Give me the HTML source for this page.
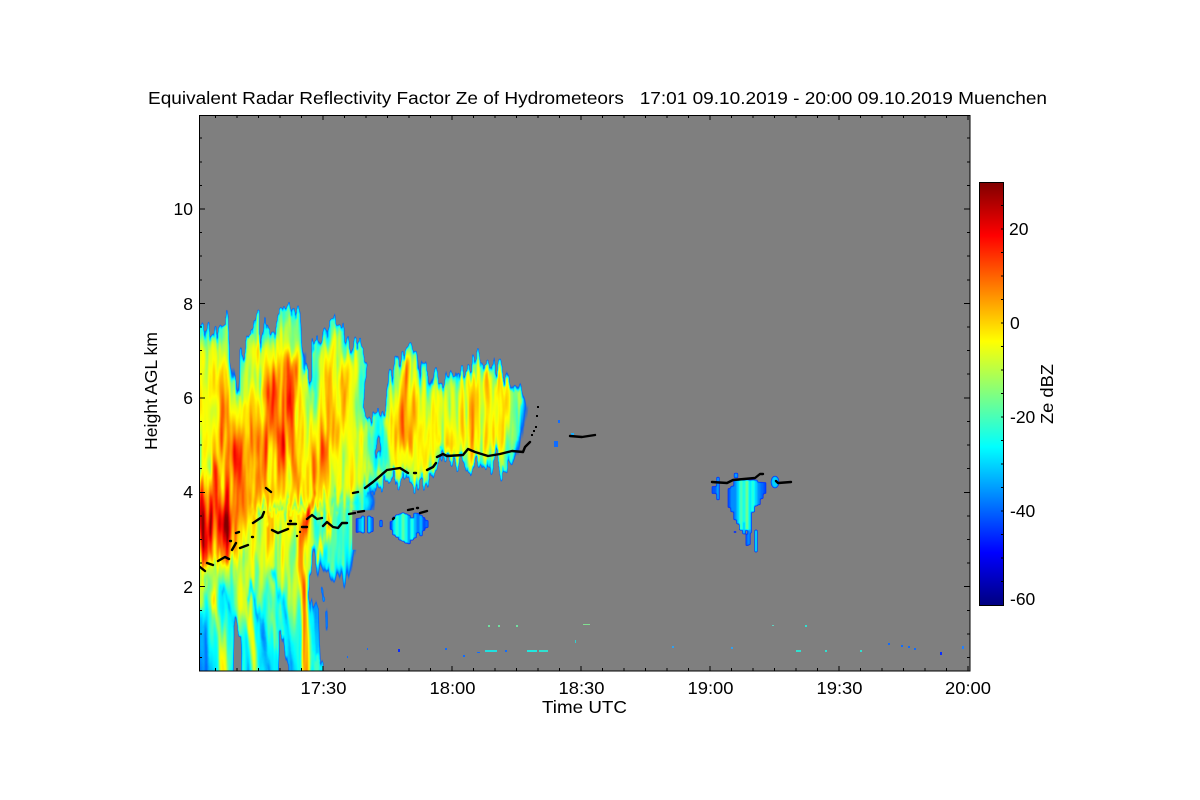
<!DOCTYPE html>
<html><head><meta charset="utf-8"><title>Radar Reflectivity</title>
<style>html,body{margin:0;padding:0;background:#fff}svg{display:block}text{font-family:"Liberation Sans",sans-serif;font-size:17.5px;fill:#000}</style>
</head><body>
<svg xmlns="http://www.w3.org/2000/svg" width="1200" height="800" viewBox="0 0 1200 800">
<defs>
<clipPath id="plot"><rect x="199" y="115" width="771" height="556"/></clipPath>
<linearGradient id="cb" x1="0" y1="0" x2="0" y2="1">
<stop offset="0" stop-color="#800000"/><stop offset=".125" stop-color="#ff0000"/><stop offset=".375" stop-color="#ffff00"/><stop offset=".5" stop-color="#80ff80"/><stop offset=".625" stop-color="#00ffff"/><stop offset=".875" stop-color="#0000ff"/><stop offset="1" stop-color="#00007f"/>
</linearGradient>
<linearGradient id="low" gradientUnits="userSpaceOnUse" x1="0" y1="485" x2="0" y2="680">
<stop offset="0" stop-color="#8c8c8c"/><stop offset=".35" stop-color="#707070"/><stop offset=".55" stop-color="#5a5a5a"/><stop offset=".8" stop-color="#424242"/><stop offset="1" stop-color="#383838"/>
</linearGradient>
<filter id="jet" filterUnits="userSpaceOnUse" x="150" y="80" width="870" height="640" color-interpolation-filters="sRGB">
<feTurbulence type="fractalNoise" baseFrequency=".3 .012" numOctaves="3" seed="4" result="n"/>
<feColorMatrix in="n" type="matrix" values="0 0 0 0 .5  0 1 0 0 0  0 0 0 0 0  0 0 0 0 1" result="d"/>
<feDisplacementMap in="SourceGraphic" in2="d" scale="50" xChannelSelector="R" yChannelSelector="G" result="s"/>
<feTurbulence type="fractalNoise" baseFrequency=".2 .014" numOctaves="2" seed="11" result="n2"/>
<feColorMatrix in="n2" type="matrix" values="1 0 0 0 0  1 0 0 0 0  1 0 0 0 0  0 0 0 0 1" result="g"/>
<feComposite in="s" in2="g" operator="arithmetic" k1="1.1" k2=".45" k3="0" k4="0" result="m"/>
<feGaussianBlur in="m" stdDeviation=".8"/>
<feComponentTransfer>
<feFuncR type="table" tableValues=".5 .5 0 0 0 0 .235 .47 .706 .9 1 1 1 1 1 1 1 1 .94 .78 .5"/>
<feFuncG type="table" tableValues=".5 .5 .39 .67 .9 1 1 1 1 1 1 .88 .745 .627 .51 .373 .235 .098 0 0 0"/>
<feFuncB type="table" tableValues=".5 .5 1 1 1 1 .784 .51 .275 .078 0 0 0 0 0 0 0 0 0 0 0"/>
</feComponentTransfer>
</filter>
<filter id="jet2" filterUnits="userSpaceOnUse" x="352" y="510" width="84" height="40" color-interpolation-filters="sRGB">
<feGaussianBlur in="SourceGraphic" stdDeviation=".7"/>
<feComponentTransfer>
<feFuncR type="table" tableValues=".5 .5 0 0 0 0 .235 .47 .706 .9 1 1 1 1 1 1 1 1 .94 .78 .5"/>
<feFuncG type="table" tableValues=".5 .5 .157 .43 .706 1 1 1 1 1 1 .88 .745 .627 .51 .373 .235 .098 0 0 0"/>
<feFuncB type="table" tableValues=".5 .5 1 1 1 1 .784 .51 .275 .078 0 0 0 0 0 0 0 0 0 0 0"/>
</feComponentTransfer>
</filter>
<filter id="jet3" filterUnits="userSpaceOnUse" x="706" y="470" width="86" height="90" color-interpolation-filters="sRGB">
<feGaussianBlur in="SourceGraphic" stdDeviation=".7"/>
<feComponentTransfer>
<feFuncR type="table" tableValues=".5 .5 0 0 0 0 .235 .47 .706 .9 1 1 1 1 1 1 1 1 .94 .78 .5"/>
<feFuncG type="table" tableValues=".5 .5 .157 .43 .706 1 1 1 1 1 1 .88 .745 .627 .51 .373 .235 .098 0 0 0"/>
<feFuncB type="table" tableValues=".5 .5 1 1 1 1 .784 .51 .275 .078 0 0 0 0 0 0 0 0 0 0 0"/>
</feComponentTransfer>
</filter>
<filter id="inset" filterUnits="userSpaceOnUse" x="150" y="250" width="420" height="300">
<feMorphology operator="erode" radius="6"/><feGaussianBlur stdDeviation="4"/>
</filter>
<filter id="b5" filterUnits="userSpaceOnUse" x="150" y="250" width="420" height="400"><feGaussianBlur stdDeviation="5"/></filter>
<filter id="b2" filterUnits="userSpaceOnUse" x="150" y="400" width="300" height="320"><feGaussianBlur stdDeviation="1.3"/></filter>
<polygon id="m" points="190,480 190,323 200,323 210,337 215,335 220,325 227,322 228,337 232,377 240,395 240,357 248,338 255,330 257,312 259,312 259,340 265,328 273,333 280,318 283,310 287,303 289,303 290,315 300,315 303,377 312,373 312,343 323,337 330,323 345,328 347,350 360,342 367,373 363,407 367,420 373,415 385,413 390,377 402,353 410,345 415,353 420,383 423,363 428,363 430,383 443,380 457,377 470,367 473,358 480,367 493,373 500,367 507,383 513,392 523,397 520,423 513,450 507,470 502,467 497,453 490,465 470,467 462,463 457,457 440,457 443,468 438,467 423,485 417,482 397,483 390,478 380,485 367,490 363,502 300,510 190,510"/>
</defs>

<rect x="199" y="115" width="771" height="556" fill="#808080"/>

<g clip-path="url(#plot)">
<g filter="url(#jet)">
<rect x="150" y="80" width="870" height="640" fill="#000"/>
<polygon fill="url(#low)" points="190,490 370,483 353,503 347,540 342,575 337,557 327,568 322,553 312,560 308,590 311,610 313,650 323,665 323,720 190,720"/>
<use href="#m" fill="#505050"/>
<use href="#m" fill="#787878" filter="url(#inset)"/>
<g filter="url(#b5)">
<polygon fill="#a8a8a8" points="212,385 224,358 236,400 250,450 248,482 228,488 218,440"/>
<polygon fill="#bcbcbc" points="226,435 240,462 234,482 222,472"/>
<polygon fill="#a8a8a8" points="285,345 300,355 298,420 295,470 265,482 250,440 252,400 270,380"/>
<polygon fill="#bcbcbc" points="287,390 297,400 295,450 276,452 268,425"/>
<polygon fill="#a0a0a0" points="330,368 345,378 345,420 325,468 315,480 310,455 325,420"/>
<polygon fill="#949494" points="230,470 335,468 325,495 250,503"/>
<polygon fill="#b0b0b0" points="190,478 240,468 256,500 250,530 235,556 190,566"/>
<polygon fill="#c8c8c8" points="190,497 225,492 238,510 230,532 190,548"/>
<polygon fill="#4c4c4c" points="312,515 375,490 345,580 312,560"/>
<polygon fill="#a8a8a8" points="398,372 410,352 418,400 412,450 397,452 392,420"/>
<polygon fill="#909090" points="424,378 431,378 431,440 424,440"/>
<polygon fill="#949494" points="468,372 480,376 480,430 466,442 460,410"/>
<polygon fill="#949494" points="493,380 504,380 505,430 494,445"/>
<polygon fill="#585858" points="508,395 525,395 518,440 508,462"/>
<ellipse cx="378" cy="447" rx="12" ry="26" fill="#3e3e3e"/>
</g>
<ellipse cx="378" cy="447" rx="3" ry="8" fill="#000"/>
<g filter="url(#b2)" fill="none" stroke-linecap="round">
<path d="M205 690C203 650 201 630 195 612" stroke="#202020" stroke-width="13"/>
<path d="M224 690C224 640 218 610 205 585" stroke="#727272" stroke-width="6"/>
<path d="M256 690C254 640 246 610 236 575" stroke="#6c6c6c" stroke-width="6"/>
<path d="M284 690C280 640 268 600 255 555" stroke="#626262" stroke-width="4"/>
<path d="M242 660C238 630 230 610 222 590" stroke="#303030" stroke-width="4"/>
<path d="M268 680C265 640 258 610 250 590" stroke="#1e1e1e" stroke-width="4"/>
<path d="M294 690C291 640 283 600 272 570" stroke="#242424" stroke-width="3"/>
<path d="M306 690C306 620 304 590 301 570C298 550 305 520 316 498" stroke="#b4b4b4" stroke-width="6"/>
<path d="M316 690C316 650 314 620 310 600" stroke="#484848" stroke-width="5"/>
<path d="M331 505C328 530 322 545 318 555" stroke="#8c8c8c" stroke-width="4"/>
</g>
<polygon fill="#000" points="233,700 242,700 241,632 234,624"/>
<polygon fill="#000" points="278,700 291,700 284,642 279,628"/>
<g fill="none" stroke-linecap="round">
<path d="M316 603L318 657" stroke="#2c2c2c" stroke-width="5"/>
<path d="M326 616L327 645" stroke="#242424" stroke-width="2.5"/>
<path d="M322 590L324 605" stroke="#242424" stroke-width="2.5"/>
</g>
</g>

<g filter="url(#jet2)">
<rect x="352" y="510" width="84" height="40" fill="#000"/>
<g fill="none" stroke-width="3">
<path d="M357 518V533" stroke="#202020"/><path d="M360 518V532" stroke="#343434"/><path d="M363 516V533" stroke="#3c3c3c"/><path d="M369 516V533" stroke="#3c3c3c"/><path d="M372 517V532" stroke="#282828"/><path d="M381 520V527" stroke="#2c2c2c"/>
<path d="M391 521V530" stroke="#202020"/><path d="M394 517V535" stroke="#3c3c3c"/><path d="M397 515V537" stroke="#4c4c4c"/><path d="M400 514V540" stroke="#3c3c3c"/><path d="M403 513V541" stroke="#545454"/><path d="M406 514V543" stroke="#444444"/><path d="M409 515V544" stroke="#303030"/><path d="M412 518V540" stroke="#484848"/><path d="M415 513V538" stroke="#343434"/><path d="M418 513V533" stroke="#282828"/><path d="M421 515V536" stroke="#343434"/><path d="M424 517V531" stroke="#202020"/><path d="M427 520V528" stroke="#262626"/>
</g>
</g>

<g filter="url(#jet3)">
<rect x="706" y="470" width="86" height="90" fill="#000"/>
<g fill="none" stroke-width="3">
<path d="M729 488V508" stroke="#222"/><path d="M732 486V512" stroke="#2c2c2c"/><path d="M735 480V520" stroke="#2c2c2c"/><path d="M738 480V524" stroke="#383838"/><path d="M741 480V530" stroke="#505050"/><path d="M744 480V526" stroke="#444"/><path d="M747 480V530" stroke="#585858"/><path d="M750 480V533" stroke="#3c3c3c"/><path d="M753 480V512" stroke="#484848"/><path d="M756 480V506" stroke="#383838"/><path d="M759 482V505" stroke="#2c2c2c"/><path d="M762 482V499" stroke="#262626"/><path d="M765 482V494" stroke="#202020"/>
<path d="M744 522V534" stroke="#383838"/><path d="M747 534V546" stroke="#242424"/><path d="M749 530V545" stroke="#2c2c2c"/>
</g>
<path d="M756 530V552" stroke="#444" stroke-width="2.5" fill="none"/>
<path d="M718 477V500" stroke="#303030" stroke-width="3" fill="none"/>
<path d="M714 486V494" stroke="#222" stroke-width="5" fill="none"/>
<path d="M735 531V533" stroke="#242424" stroke-width="3" fill="none"/>
<path d="M736 473V478" stroke="#303030" stroke-width="4" fill="none"/>
<ellipse cx="775" cy="482" rx="4" ry="6" fill="#383838"/>
</g>

<g fill="#0f6cff">
<rect x="554" y="441" width="4" height="6"/><rect x="558" y="420" width="2" height="3"/><rect x="571" y="433" width="3" height="3" fill="#18b0ff"/>
<rect x="398" y="649" width="2" height="3" fill="#0a2cff"/><rect x="367" y="648" width="1" height="2"/><rect x="347" y="656" width="1" height="2"/><rect x="445" y="648" width="2" height="2"/><rect x="463" y="655" width="2" height="2"/>
<rect x="485" y="650" width="12" height="2" fill="#20e0e0"/><rect x="477" y="652" width="3" height="1"/><rect x="527" y="650" width="10" height="2" fill="#20e8e0"/><rect x="539" y="650" width="9" height="2" fill="#30e0d0"/><rect x="505" y="650" width="2" height="2"/><rect x="488" y="625" width="2" height="2" fill="#70e0a0"/><rect x="498" y="625" width="2" height="2" fill="#70e0a0"/><rect x="516" y="625" width="2" height="2" fill="#70e0a0"/>
<rect x="583" y="624" width="7" height="1" fill="#80e090"/><rect x="575" y="640" width="1" height="3" fill="#30d0d0"/><rect x="672" y="646" width="2" height="2" fill="#30a0f0"/><rect x="731" y="647" width="2" height="2" fill="#30a0f0"/><rect x="772" y="625" width="2" height="1" fill="#60d0c0"/>
<rect x="796" y="650" width="5" height="2" fill="#30e0d0"/><rect x="805" y="625" width="2" height="2" fill="#30e0d0"/><rect x="825" y="650" width="2" height="2" fill="#30e0d0"/><rect x="860" y="650" width="2" height="2" fill="#30e0d0"/><rect x="888" y="643" width="2" height="2"/><rect x="901" y="645" width="2" height="2"/><rect x="908" y="646" width="2" height="2"/><rect x="914" y="648" width="2" height="2"/><rect x="940" y="652" width="2" height="3" fill="#0a2cff"/><rect x="962" y="646" width="2" height="3" fill="#2080ff"/>
</g>

<g fill="none" stroke="#000" stroke-width="2.4" stroke-linejoin="round" stroke-linecap="round">
<path d="M200 567L205 571M207 563L213 565M218 561L225 557L229 559M232 550L236 543M230 541L231 541M236 533L239 532M240 548L248 545M252 537L253 537M253 523L262 517L264 512M266 488L271 492"/>
<path d="M272 530L278 533L288 529M288 524L296 524M290 521L291 521M300 532L300 532M297 536L297 536M302 527L307 527M307 519L312 515L317 519L322 518M323 526L327 522L333 527L338 528L342 523L347 523M349 514L355 513M358 512L364 511M353 493L358 492"/>
<path d="M365 488L373 482L387 470L400 468L408 473M414 473L416 473M427 470L433 467L436 463M437 457L443 454L447 456L463 455L468 449L475 452L488 456L500 454L512 451L523 452L525 447L530 442"/>
<path d="M408 510L413 509M417 508L418 508M420 513L427 511M393 519L394 518"/>
<path d="M712 482L727 483L733 480L755 478L760 474L763 474M776 481L778 483L791 482M570 436L582 437L595 435"/>
</g>
<g fill="#000">
<rect x="531" y="434" width="2" height="2"/><rect x="533" y="430" width="2" height="2"/><rect x="535" y="426" width="2" height="2"/><rect x="536" y="415" width="2" height="2"/><rect x="537" y="406" width="2" height="2"/>
</g>
</g>

<rect x="199.5" y="115.5" width="770.5" height="555.5" fill="none" stroke="#000" stroke-width="1"/>
<path fill="none" stroke="#000" stroke-width="1" d="
M215.5 115v3M237 115v3M258.5 115v3M280 115v3M301.5 115v3M323 115v5M344.5 115v3M366 115v3M387.5 115v3M409 115v3M430.5 115v3M452 115v5M473.5 115v3M495 115v3M516.5 115v3M538 115v3M559.5 115v3M581 115v5M602.5 115v3M624 115v3M645.5 115v3M667 115v3M688.5 115v3M710 115v5M731.5 115v3M753 115v3M774.5 115v3M796 115v3M817.5 115v3M839 115v5M860.5 115v3M882 115v3M903.5 115v3M925 115v3M946.5 115v3M968 115v5
M215.5 671v-3M237 671v-3M258.5 671v-3M280 671v-3M301.5 671v-3M323 671v-5M344.5 671v-3M366 671v-3M387.5 671v-3M409 671v-3M430.5 671v-3M452 671v-5M473.5 671v-3M495 671v-3M516.5 671v-3M538 671v-3M559.5 671v-3M581 671v-5M602.5 671v-3M624 671v-3M645.5 671v-3M667 671v-3M688.5 671v-3M710 671v-5M731.5 671v-3M753 671v-3M774.5 671v-3M796 671v-3M817.5 671v-3M839 671v-5M860.5 671v-3M882 671v-3M903.5 671v-3M925 671v-3M946.5 671v-3M968 671v-5
M199 657.5h3M199 634h3M199 610.5h3M199 586.5h6M199 563h3M199 539.5h3M199 516h3M199 492.5h6M199 468.5h3M199 445h3M199 421.5h3M199 398h6M199 374h3M199 350.5h3M199 327h3M199 303.5h6M199 280h3M199 256h3M199 232.5h3M199 209h6M199 185.5h3M199 162h3M199 138h3
M970 657.5h-3M970 634h-3M970 610.5h-3M970 586.5h-6M970 563h-3M970 539.5h-3M970 516h-3M970 492.5h-6M970 468.5h-3M970 445h-3M970 421.5h-3M970 398h-6M970 374h-3M970 350.5h-3M970 327h-3M970 303.5h-6M970 280h-3M970 256h-3M970 232.5h-3M970 209h-6M970 185.5h-3M970 162h-3M970 138h-3"/>

<rect x="979.5" y="182.5" width="24" height="423" fill="url(#cb)" stroke="#000" stroke-width="1"/>
<path fill="none" stroke="#000" stroke-width="1" d="M1003 205.5h-2M1003 229h-2M1003 252.5h-2M1003 276h-2M1003 299.5h-2M1003 323h-2M1003 346.5h-2M1003 370h-2M1003 393.5h-2M1003 417h-2M1003 440.5h-2M1003 464h-2M1003 487.5h-2M1003 511h-2M1003 534.5h-2M1003 558h-2M1003 581.5h-2"/>

<text x="148" y="104" textLength="899" lengthAdjust="spacingAndGlyphs">Equivalent Radar Reflectivity Factor Ze of Hydrometeors&#160;&#160;&#160;17:01 09.10.2019 - 20:00 09.10.2019 Muenchen</text>
<g text-anchor="middle">
<text x="323.5" y="694" textLength="46" lengthAdjust="spacingAndGlyphs">17:30</text>
<text x="452.5" y="694" textLength="46" lengthAdjust="spacingAndGlyphs">18:00</text>
<text x="581.5" y="694" textLength="46" lengthAdjust="spacingAndGlyphs">18:30</text>
<text x="710.5" y="694" textLength="46" lengthAdjust="spacingAndGlyphs">19:00</text>
<text x="839.5" y="694" textLength="46" lengthAdjust="spacingAndGlyphs">19:30</text>
<text x="968" y="694" textLength="46" lengthAdjust="spacingAndGlyphs">20:00</text>
</g>
<text x="542" y="713" textLength="85" lengthAdjust="spacingAndGlyphs">Time UTC</text>
<g text-anchor="end">
<text x="193" y="215">10</text>
<text x="193" y="310">8</text>
<text x="193" y="404">6</text>
<text x="193" y="498">4</text>
<text x="193" y="593">2</text>
</g>
<text transform="translate(157 450) rotate(-90)" textLength="118" lengthAdjust="spacingAndGlyphs">Height AGL km</text>
<text x="1009" y="235">20</text>
<text x="1010" y="329">0</text>
<text x="1010" y="423">-20</text>
<text x="1010" y="517">-40</text>
<text x="1010" y="605">-60</text>
<text transform="translate(1053 424) rotate(-90)" textLength="60" lengthAdjust="spacingAndGlyphs">Ze dBZ</text>
</svg>
</body></html>
